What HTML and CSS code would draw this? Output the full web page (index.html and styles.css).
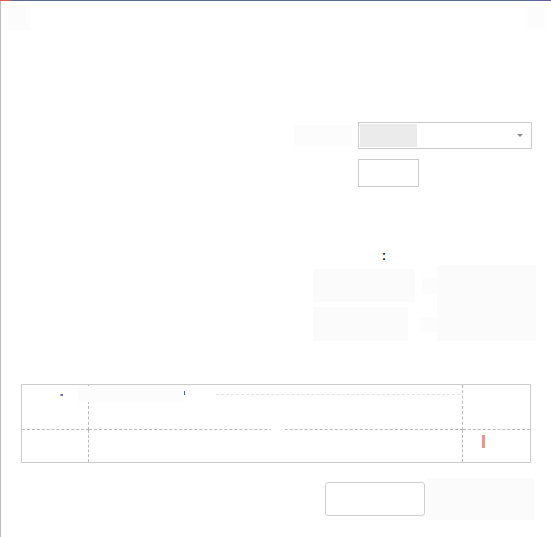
FILE: index.html
```html
<!DOCTYPE html>
<html lang="en">
<head>
<meta charset="utf-8">
<title>Form</title>
<link rel="stylesheet" href="styles.css">
</head>
<body>
<div class="topbar"></div>
<div class="page">
  <div class="header">
    <div class="ghost ghost-logo"></div>
    <div class="ghost ghost-close"></div>
  </div>

  <div class="form-row row-select">
    <div class="ghost ghost-label"></div>
    <div class="select">
      <div class="select-value"></div>
      <span class="caret"></span>
    </div>
  </div>

  <div class="form-row row-input">
    <div class="input"></div>
  </div>

  <div class="colon-row"><span class="colon">:</span></div>

  <div class="blocks">
    <div class="blocks-left">
      <div class="blk-line">
        <div class="ghost blk-a"></div>
        <div class="ghost blk-sa"></div>
      </div>
      <div class="blk-line">
        <div class="ghost blk-b"></div>
        <div class="ghost blk-sb"></div>
      </div>
    </div>
    <div class="ghost blk-big"></div>
  </div>

  <div class="table">
    <div class="cell c11"><span class="dot"></span></div>
    <div class="cell c12">
      <div class="ghost cell-ghost"></div>
      <span class="tick"></span>
      <span class="faint-dash"></span>
    </div>
    <div class="cell c13"></div>
    <div class="cell c21"></div>
    <div class="cell c22"><span class="gap"></span></div>
    <div class="cell c23"><span class="pink"></span></div>
  </div>

  <div class="bottom">
    <div class="btn"></div>
    <div class="ghost btn-ghost"></div>
  </div>
</div>
</body>
</html>
```

FILE: styles.css
```css
html, body {
  margin: 0;
  padding: 0;
  background: #ffffff;
  font-family: "Liberation Sans", Arial, sans-serif;
}

body {
  width: 551px;
  height: 537px;
  overflow: hidden;
}

.topbar {
  height: 1px;
  background: linear-gradient(to right, #e4574a 0, #d86050 8px, #5b6c8e 14px, #5b6c8e 96%, #6c5aa0 100%);
}

.page {
  border-left: 1px solid #bcbcbc;
  height: 536px;
  box-sizing: border-box;
}

.ghost {
  background: #fbfbfb;
}

.header {
  display: flex;
  justify-content: space-between;
  padding: 5px 6px 0 6px;
  height: 24px;
}

.ghost-logo {
  width: 23px;
  height: 24px;
  background: #fcfcfc;
}

.ghost-close {
  width: 18px;
  height: 21px;
  margin-top: 1px;
  background: #fcfcfc;
}

.form-row {
  display: flex;
  align-items: center;
}

.row-select {
  margin-top: 92px;
  padding-left: 293px;
}

.ghost-label {
  width: 58px;
  height: 21px;
  margin-right: 6px;
  background: #fcfcfc;
}

.select {
  position: relative;
  width: 174px;
  height: 27px;
  box-sizing: border-box;
  border: 1px solid #cccccc;
  padding: 1px;
}

.select-value {
  width: 57px;
  height: 23px;
  background: #ebebeb;
}

.caret {
  position: absolute;
  right: 8px;
  top: 11px;
  width: 0;
  height: 0;
  border-left: 3px solid transparent;
  border-right: 3px solid transparent;
  border-top: 3px solid #8a8a8a;
}

.row-input {
  margin-top: 10px;
  padding-left: 357px;
}

.input {
  width: 61px;
  height: 28px;
  box-sizing: border-box;
  border: 1px solid #cccccc;
}

.colon-row {
  margin-top: 63px;
  padding-left: 381px;
  height: 12px;
  line-height: 12px;
  font-size: 12px;
  font-weight: bold;
  color: #111111;
}

.blocks {
  display: flex;
  margin-top: 3px;
  padding-left: 312px;
}

.blocks-left {
  display: flex;
  flex-direction: column;
  gap: 5px;
  padding-top: 4px;
}

.blk-line {
  display: flex;
  align-items: center;
}

.blk-a {
  width: 102px;
  height: 33px;
}

.blk-sa {
  width: 20px;
  height: 16px;
  margin-left: 7px;
  background: #fcfcfc;
}

.blk-b {
  width: 95px;
  height: 34px;
}

.blk-sb {
  width: 21px;
  height: 15px;
  margin-left: 12px;
  background: #fcfcfc;
}

.blk-big {
  width: 99px;
  height: 76px;
  margin-left: -5px;
}

.table {
  display: grid;
  grid-template-columns: 67px 374px 1fr;
  grid-template-rows: 45px 32px;
  width: 510px;
  margin-top: 43px;
  margin-left: 20px;
  border: 1px solid #cccccc;
  box-sizing: border-box;
  height: 79px;
}

.cell {
  position: relative;
}

.c11, .c12, .c13 {
  border-bottom: 1px dashed #b8b8b8;
}

.c11, .c12, .c21, .c22 {
  border-right: 1px dashed #b8b8b8;
}

.dot {
  position: absolute;
  left: 39px;
  top: 9px;
  width: 2px;
  height: 2px;
  background: #5576c8;
  box-shadow: -1px 0 0 #d9a3b4;
}

.cell-ghost {
  position: absolute;
  left: -11px;
  top: 1px;
  width: 106px;
  height: 16px;
  background: #fcfcfc;
}

.tick {
  position: absolute;
  left: 95px;
  top: 6px;
  width: 1px;
  height: 4px;
  background: #3d68b8;
}

.faint-dash {
  position: absolute;
  left: 127px;
  right: 2px;
  top: 9px;
  border-top: 1px dashed #e4e4e4;
}

.gap {
  position: absolute;
  left: 182px;
  top: -1px;
  width: 14px;
  height: 1px;
  background: #ffffff;
}

.pink {
  position: absolute;
  left: 19px;
  top: 5px;
  width: 3px;
  height: 13px;
  background: #f4928a;
}

.bottom {
  display: flex;
  align-items: center;
  margin-top: 15px;
  padding-left: 324px;
}

.btn {
  width: 100px;
  height: 34px;
  box-sizing: border-box;
  border: 1px solid #cfcfcf;
  border-radius: 3px;
  background: #ffffff;
}

.btn-ghost {
  width: 108px;
  height: 42px;
  margin-left: 1px;
}
```
